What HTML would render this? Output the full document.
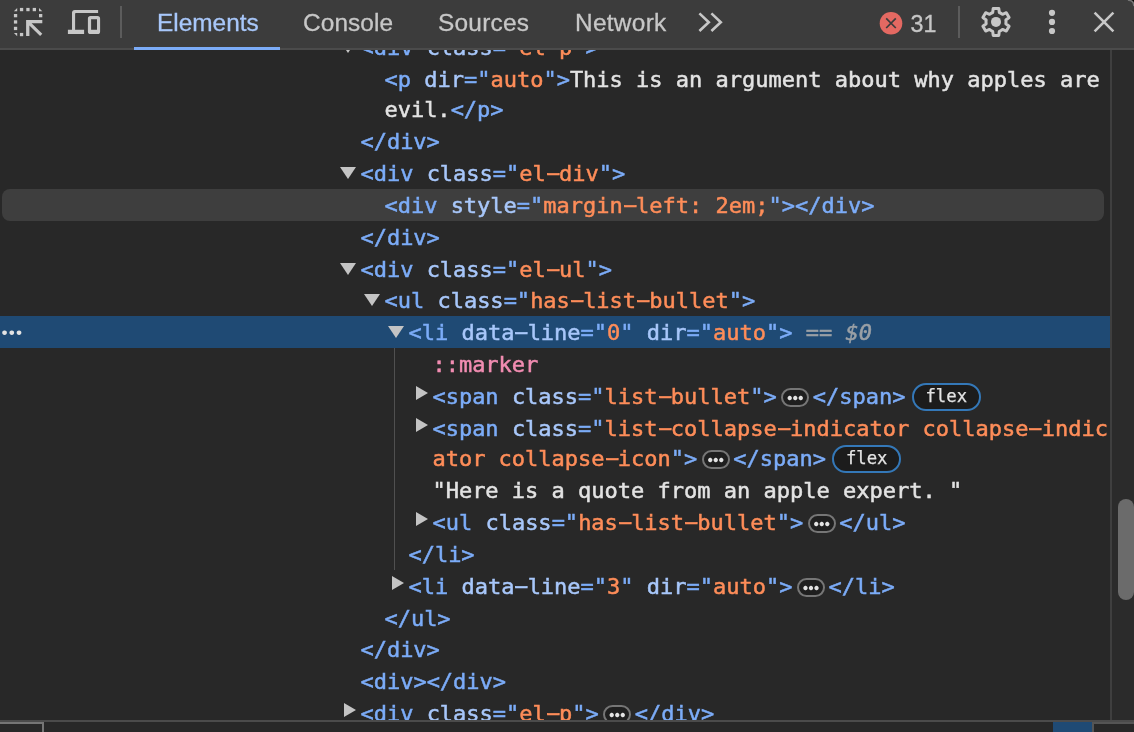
<!DOCTYPE html>
<html lang="en">
<head>
<meta charset="utf-8">
<title>DevTools - Elements</title>
<style>
html,body{margin:0;padding:0;}
body{width:1134px;height:732px;overflow:hidden;background:#282828;position:relative;font-family:"Liberation Sans",sans-serif;}
#corner{position:absolute;left:0;top:0;width:1134px;height:60px;background:#000;}
#toolbar{position:absolute;left:0;top:0;width:1134px;height:48px;background:#3c3c3c;border-bottom:2px solid #4b4b4b;border-top-right-radius:3.5px;will-change:transform;}
.tab{position:absolute;top:8.5px;height:28px;line-height:28px;font-size:24.4px;letter-spacing:0.1px;-webkit-text-stroke:0.3px;color:#c7c7c7;white-space:nowrap;}
#tab-el{color:#a8c7fa;letter-spacing:0;}
#underline{position:absolute;left:134px;top:47px;width:146px;height:3px;background:#7cacf8;}
.vdiv{position:absolute;top:6px;width:2px;height:32px;background:#5c5c5c;}
svg{position:absolute;overflow:visible;}
#count{position:absolute;left:910.6px;top:9.8px;height:28px;line-height:28px;font-size:23.3px;-webkit-text-stroke:0.3px;color:#c7c7c7;}
#content{position:absolute;left:0;top:50px;width:1134px;height:670px;overflow:hidden;background:#282828;}
#tree{position:absolute;left:0;top:-50px;width:1110px;height:732px;font-family:"DejaVu Sans Mono","Liberation Mono",monospace;font-size:22px;color:#e3e3e3;will-change:transform;-webkit-text-stroke:0.5px;}
.row{position:absolute;left:0;height:32px;line-height:32px;white-space:pre;}
.h{display:inline-block;transform:translate(0.8px,-1px) scaleX(2.05);}
.t{color:#7cacf8;}
.n{color:#a8c7fa;}
.v{color:#fe8d59;}
.p{color:#f28db2;}
.g{color:#9aa0a6;}
.arrow{position:absolute;width:0;height:0;}
.ad{border-left:8px solid transparent;border-right:8px solid transparent;border-top:12px solid #c4c4c4;}
.ar{border-top:7.8px solid transparent;border-bottom:7.8px solid transparent;border-left:12.3px solid #c4c4c4;}
#hover{position:absolute;left:2px;top:189px;width:1102px;height:32px;border-radius:8px;background:#3e3e3e;}
#sel{position:absolute;left:0;top:316px;width:1110px;height:32px;background:#1f4a74;}
#gut{position:absolute;left:1.1px;top:311.1px;height:32px;line-height:32px;font-family:"Liberation Serif",serif;font-size:21.6px;color:#e3e3e3;-webkit-text-stroke:2.1px #e3e3e3;}
#guide{position:absolute;left:394px;top:348px;width:1px;height:222px;background:#505050;}
.dots{display:inline-block;vertical-align:top;position:relative;width:28px;height:19px;margin:7.4px 3.6px 0 4.4px;border:2px solid #767676;border-radius:10px;box-sizing:border-box;background:#1f1f1f;font-family:"Liberation Serif",serif;font-size:16.5px;line-height:15px;text-align:center;color:#e3e3e3;-webkit-text-stroke:2.3px #e3e3e3;overflow:hidden;}
.dots b{position:absolute;left:3.7px;top:-4.5px;font-weight:normal;}
.badge{display:inline-block;vertical-align:top;height:28px;line-height:24px;margin:2.1px 0 0 6.3px;border:2px solid #3478b8;border-radius:14px;box-sizing:border-box;background:#1c1c1c;color:#e3e3e3;font-size:17.3px;line-height:23px;padding:0 11.6px;-webkit-text-stroke:0.25px;}
#sbline{position:absolute;left:1110px;top:50px;width:2px;height:670px;background:#3f3f3f;}
#sbtrack{position:absolute;left:1112px;top:50px;width:22px;height:670px;background:#2b2b2b;}
#thumb{position:absolute;left:1118px;top:498.7px;width:16px;height:101.3px;border-radius:8px;background:#6b6b6b;}
#bl{position:absolute;left:0;top:722px;width:44px;height:12px;box-sizing:border-box;border-top:2px solid #757575;border-right:2px solid #757575;}
#bsel{position:absolute;left:1053px;top:722px;width:39px;height:10px;background:#1f4a74;}
#br{position:absolute;left:1092px;top:722px;width:50px;height:12px;box-sizing:border-box;border-top:2px solid #555;border-left:2px solid #555;}
#bottom{position:absolute;left:0;top:720px;width:1134px;height:12px;background:#282828;border-top:2px solid #4b4b4b;box-sizing:border-box;}
</style>
</head>
<body>
<div id="corner"></div>
<div id="toolbar">
 <svg id="ic-select" style="left:13px;top:7px" width="30" height="30" viewBox="13 7 30 30">
  <g fill="#c7c7c7">
   <path d="M13.9 11.2 L17.2 7.9 V11.2 Z"/><rect x="19.9" y="7.9" width="3.3" height="3.3"/><rect x="26.3" y="7.9" width="3.3" height="3.3"/><rect x="32.7" y="7.9" width="3.3" height="3.3"/><path d="M39 7.9 L42.3 11.2 H39 Z"/>
   <rect x="13.9" y="14" width="3.3" height="3.3"/><rect x="13.9" y="20.3" width="3.3" height="3.3"/><rect x="13.9" y="26.8" width="3.3" height="3.3"/><path d="M13.9 32.9 H17.2 V36.2 Z"/>
   <rect x="39" y="14" width="3.3" height="3.3"/><rect x="19.9" y="32.9" width="3.3" height="3.3"/>
   <path d="M26.1 20.1 H42.3 V23.2 H31.6 L42.3 33.8 L40.1 36.1 L29.4 25.4 V36.1 H26.1 Z"/>
  </g>
 </svg>
 <svg id="ic-device" style="left:67px;top:9px" width="34" height="26" viewBox="67 9 34 26">
  <g fill="#c7c7c7">
   <path d="M74.9 9.9 H98.1 V13.1 H75.9 Q75.1 13.1 75.1 13.9 V29.8 H84.1 V34 H67.9 V29.8 H72 V12.8 Q72 9.9 74.9 9.9 Z"/>
   <path fill-rule="evenodd" d="M90.5 16 H97.5 Q100.1 16 100.1 18.6 V31.5 Q100.1 34.1 97.5 34.1 H90.5 Q87.9 34.1 87.9 31.5 V18.6 Q87.9 16 90.5 16 Z M91.1 19.2 V29.8 H97 V19.2 Z"/>
  </g>
 </svg>
 <div class="vdiv" style="left:120px"></div>
 <div class="tab" id="tab-el" style="left:157px">Elements</div>
 <div class="tab" style="left:303px">Console</div>
 <div class="tab" style="left:438px;letter-spacing:0.25px">Sources</div>
 <div class="tab" style="left:575px;letter-spacing:0.3px">Network</div>
 <svg id="ic-more" style="left:697px;top:11px" width="26" height="22" viewBox="697 11 26 22">
  <g fill="none" stroke="#c7c7c7" stroke-width="2.6"><path d="M699.4 13.4 L708.8 22.2 L699.4 31"/><path d="M711.4 13.4 L720.8 22.2 L711.4 31"/></g>
 </svg>
 <svg id="ic-err" style="left:879px;top:11px" width="24" height="24" viewBox="879 11 24 24">
  <circle cx="891" cy="23.2" r="11.3" fill="#e46962"/>
  <path d="M886.2 18.4 L895.8 28 M895.8 18.4 L886.2 28" stroke="#3c3c3c" stroke-width="1.7" fill="none"/>
 </svg>
 <div id="count">31</div>
 <div class="vdiv" style="left:958px"></div>
 <svg id="ic-gear" style="left:978px;top:4px" width="36" height="36" viewBox="978 4 36 36">
  <path d="M992.70 12.46 L993.20 8.39 L998.80 8.39 L999.30 12.46 A10.00 10.00 0 0 1 1002.53 14.32 L1006.30 12.72 L1009.10 17.57 L1005.83 20.04 A10.00 10.00 0 0 1 1005.83 23.76 L1009.10 26.23 L1006.30 31.08 L1002.53 29.48 A10.00 10.00 0 0 1 999.30 31.34 L998.80 35.41 L993.20 35.41 L992.70 31.34 A10.00 10.00 0 0 1 989.47 29.48 L985.70 31.08 L982.90 26.23 L986.17 23.76 A10.00 10.00 0 0 1 986.17 20.04 L982.90 17.57 L985.70 12.72 L989.47 14.32 A10.00 10.00 0 0 1 992.70 12.46 Z" fill="none" stroke="#c7c7c7" stroke-width="3" stroke-linejoin="round"/>
  <circle cx="996" cy="21.9" r="5" fill="#c7c7c7"/>
 </svg>
 <svg id="ic-kebab" style="left:1048px;top:9px" width="8" height="26" viewBox="1048 9 8 26">
  <g fill="#c7c7c7"><circle cx="1052" cy="12.8" r="3.1"/><circle cx="1052" cy="21.9" r="3.1"/><circle cx="1052" cy="31" r="3.1"/></g>
 </svg>
 <svg id="ic-close" style="left:1092px;top:10px" width="24" height="24" viewBox="1092 10 24 24">
  <path d="M1094.6 12.6 L1113.4 31.4 M1113.4 12.6 L1094.6 31.4" stroke="#c7c7c7" stroke-width="2.6" fill="none"/>
 </svg>
 <svg id="ic-corner" style="left:1122px;top:0" width="12" height="12" viewBox="1122 0 12 12"><path d="M1128.6 0.3 Q1133.6 0.6 1133.8 5.4" stroke="#8a8a8a" stroke-opacity="0.75" stroke-width="1.6" stroke-linecap="round" fill="none"/></svg>
</div>
<div id="underline"></div>
<div id="content">
 <div id="tree">
  <div id="hover"></div>
  <div id="sel"></div>
  <div id="gut">…</div>
  <div id="guide"></div>
  <span class="arrow ad" style="left:340px;top:41.0px"></span><div class="row" style="left:360.4px;top:32px"><span class="t">&lt;div</span> <span class="n">class</span><span class="t">="</span><span class="v">el<span class="h">-</span>p</span><span class="t">"</span><span class="t">&gt;</span></div>
  <div class="row" style="left:384.4px;top:64px"><span class="t">&lt;p</span> <span class="n">dir</span><span class="t">="</span><span class="v">auto</span><span class="t">"</span><span class="t">&gt;</span>This is an argument about why apples are</div>
  <div class="row" style="left:384.4px;top:94px">evil.<span class="t">&lt;/p&gt;</span></div>
  <div class="row" style="left:360.4px;top:126px"><span class="t">&lt;/div&gt;</span></div>
  <span class="arrow ad" style="left:340px;top:167.0px"></span><div class="row" style="left:360.4px;top:158px"><span class="t">&lt;div</span> <span class="n">class</span><span class="t">="</span><span class="v">el<span class="h">-</span>div</span><span class="t">"</span><span class="t">&gt;</span></div>
  <div class="row" style="left:384.4px;top:190px"><span class="t">&lt;div</span> <span class="n">style</span><span class="t">="</span><span class="v">margin<span class="h">-</span>left: 2em;</span><span class="t">"</span><span class="t">&gt;</span><span class="t">&lt;/div&gt;</span></div>
  <div class="row" style="left:360.4px;top:222px"><span class="t">&lt;/div&gt;</span></div>
  <span class="arrow ad" style="left:340px;top:263.0px"></span><div class="row" style="left:360.4px;top:254px"><span class="t">&lt;div</span> <span class="n">class</span><span class="t">="</span><span class="v">el<span class="h">-</span>ul</span><span class="t">"</span><span class="t">&gt;</span></div>
  <span class="arrow ad" style="left:364px;top:294.0px"></span><div class="row" style="left:384.4px;top:285px"><span class="t">&lt;ul</span> <span class="n">class</span><span class="t">="</span><span class="v">has<span class="h">-</span>list<span class="h">-</span>bullet</span><span class="t">"</span><span class="t">&gt;</span></div>
  <span class="arrow ad" style="left:388px;top:326.0px"></span><div class="row" style="left:408.4px;top:317px"><span class="t">&lt;li</span> <span class="n">data<span class="h">-</span>line</span><span class="t">="</span><span class="v">0</span><span class="t">"</span> <span class="n">dir</span><span class="t">="</span><span class="v">auto</span><span class="t">"</span><span class="t">&gt;</span><span class="g"> == <i>$0</i></span></div>
  <div class="row" style="left:432.4px;top:349px"><span class="p">::marker</span></div>
  <span class="arrow ar" style="left:415.7px;top:385.80px"></span><div class="row" style="left:432.4px;top:381px"><span class="t">&lt;span</span> <span class="n">class</span><span class="t">="</span><span class="v">list<span class="h">-</span>bullet</span><span class="t">"</span><span class="t">&gt;</span><span class="dots"><b>…</b></span><span class="t">&lt;/span&gt;</span><span class="badge">flex</span></div>
  <span class="arrow ar" style="left:415.7px;top:417.80px"></span><div class="row" style="left:432.4px;top:413px"><span class="t">&lt;span</span> <span class="n">class</span><span class="t">="</span><span class="v">list<span class="h">-</span>collapse<span class="h">-</span>indicator collapse<span class="h">-</span>indic</span></div>
  <div class="row" style="left:432.4px;top:443px"><span class="v">ator collapse<span class="h">-</span>icon</span><span class="t">"&gt;</span><span class="dots"><b>…</b></span><span class="t">&lt;/span&gt;</span><span class="badge">flex</span></div>
  <div class="row" style="left:432.4px;top:475px">"Here is a quote from an apple expert. "</div>
  <span class="arrow ar" style="left:415.7px;top:511.80px"></span><div class="row" style="left:432.4px;top:507px"><span class="t">&lt;ul</span> <span class="n">class</span><span class="t">="</span><span class="v">has<span class="h">-</span>list<span class="h">-</span>bullet</span><span class="t">"</span><span class="t">&gt;</span><span class="dots"><b>…</b></span><span class="t">&lt;/ul&gt;</span></div>
  <div class="row" style="left:408.4px;top:539px"><span class="t">&lt;/li&gt;</span></div>
  <span class="arrow ar" style="left:391.7px;top:575.80px"></span><div class="row" style="left:408.4px;top:571px"><span class="t">&lt;li</span> <span class="n">data<span class="h">-</span>line</span><span class="t">="</span><span class="v">3</span><span class="t">"</span> <span class="n">dir</span><span class="t">="</span><span class="v">auto</span><span class="t">"</span><span class="t">&gt;</span><span class="dots"><b>…</b></span><span class="t">&lt;/li&gt;</span></div>
  <div class="row" style="left:384.4px;top:603px"><span class="t">&lt;/ul&gt;</span></div>
  <div class="row" style="left:360.4px;top:634px"><span class="t">&lt;/div&gt;</span></div>
  <div class="row" style="left:360.4px;top:666px"><span class="t">&lt;div</span><span class="t">&gt;</span><span class="t">&lt;/div&gt;</span></div>
  <span class="arrow ar" style="left:343.7px;top:702.80px"></span><div class="row" style="left:360.4px;top:698px"><span class="t">&lt;div</span> <span class="n">class</span><span class="t">="</span><span class="v">el<span class="h">-</span>p</span><span class="t">"</span><span class="t">&gt;</span><span class="dots"><b>…</b></span><span class="t">&lt;/div&gt;</span></div>
 </div>
</div>
<div id="sbline"></div>
<div id="sbtrack"></div>
<div id="thumb"></div>
<div id="bottom"></div>
<div id="bl"></div>
<div id="bsel"></div>
<div id="br"></div>
</body>
</html>
